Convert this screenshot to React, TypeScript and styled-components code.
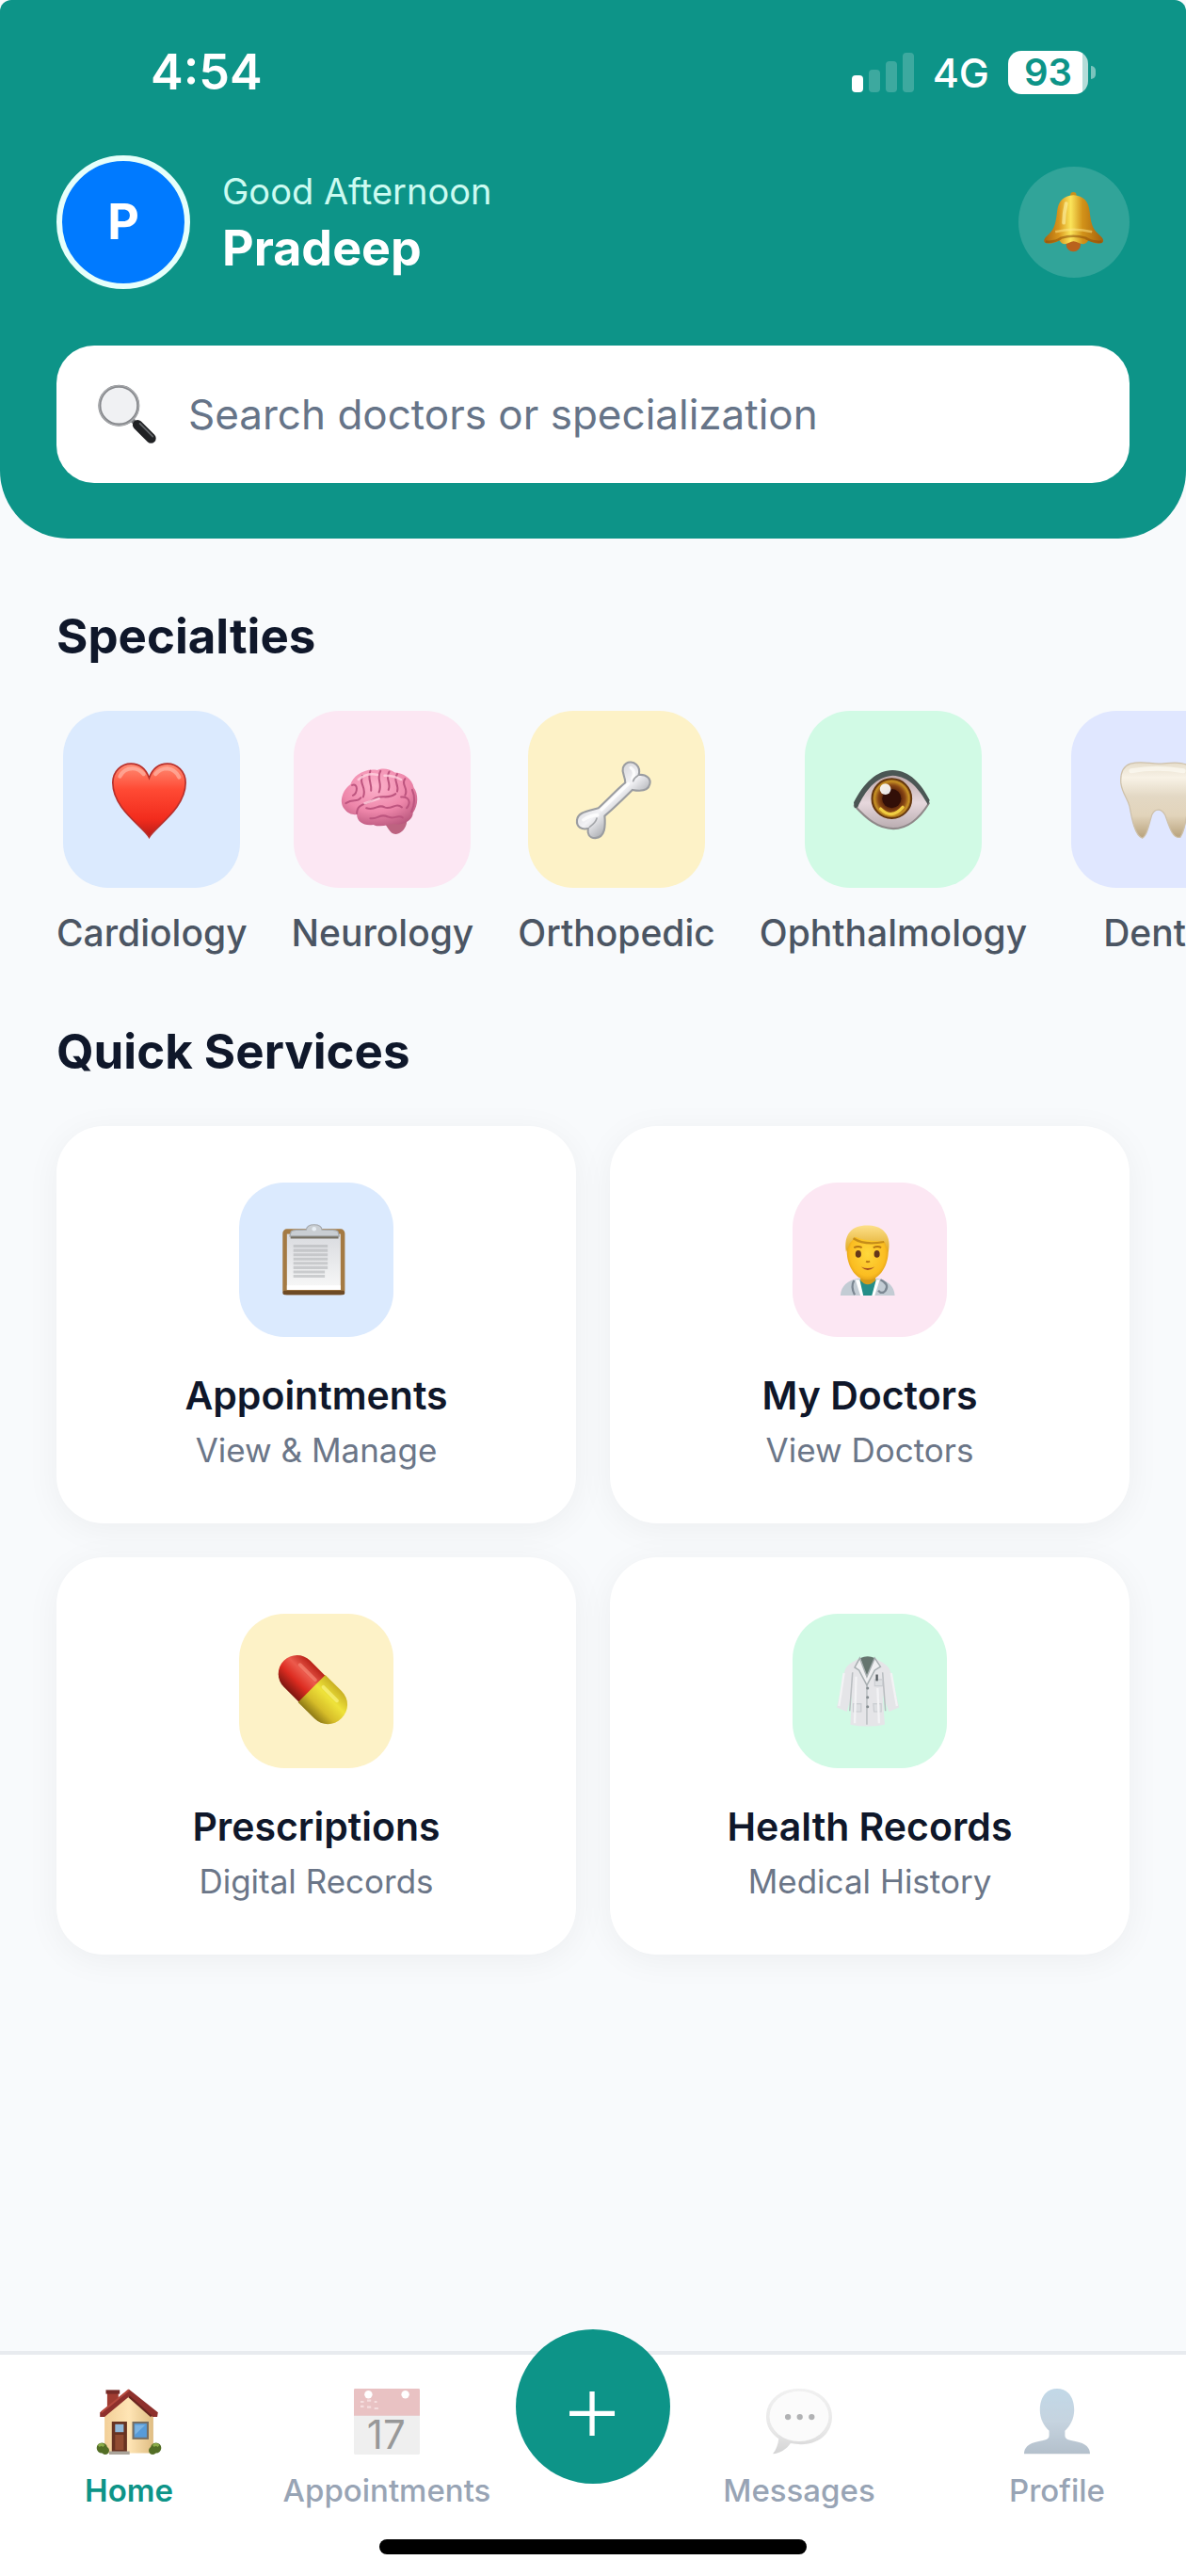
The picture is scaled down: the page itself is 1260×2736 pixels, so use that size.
import React from 'react';
import styled, { createGlobalStyle } from 'styled-components';

const teal = '#0d9488';

const GlobalStyle = createGlobalStyle`
  *, *::before, *::after { box-sizing: border-box; }
  body {
    margin: 0;
    background: #f8fafc;
    font-family: Inter, "Liberation Sans", sans-serif;
    color: #0f172a;
  }
  button, input { font-family: inherit; }
  h1, h2, h3, p, ul { margin: 0; padding: 0; }
  ul { list-style: none; }
`;

const Page = styled.div`
  min-height: 100vh;
  display: flex;
  flex-direction: column;
  overflow-x: hidden;
`;

const Header = styled.header`
  background: ${teal};
  border-radius: 12px 12px 72px 72px;
  padding: 0 60px 59px;
  color: #fff;
`;

const StatusBar = styled.div`
  height: 153px;
  padding: 0 36px 0 100px;
  display: flex;
  align-items: center;
  justify-content: space-between;
`;

const Clock = styled.time`
  font-size: 52px;
  line-height: 60px;
  font-weight: 600;
`;

const StatusIcons = styled.div`
  display: flex;
  align-items: center;
  gap: 20px;
  font-size: 43px;
  line-height: 52px;
  font-weight: 500;
`;

const Signal = styled.div`
  display: flex;
  align-items: flex-end;
  gap: 6px;
  height: 42px;
`;

const SignalBar = styled.span<{ $height: number; $on?: boolean }>`
  width: 12px;
  height: ${(p) => p.$height}px;
  border-radius: 4px;
  background: ${(p) => (p.$on ? '#fff' : 'rgba(255, 255, 255, 0.2)')};
`;

const Battery = styled.div`
  display: flex;
  align-items: center;
  gap: 3px;
`;

const BatteryBody = styled.span`
  width: 85px;
  height: 46px;
  border-radius: 14px;
  background: linear-gradient(to right, #fff 93%, #b4dcd8 93%);
  color: ${teal};
  font-size: 40px;
  line-height: 46px;
  font-weight: 600;
  text-align: center;
`;

const BatteryTip = styled.span`
  width: 5px;
  height: 14px;
  border-radius: 0 5px 5px 0;
  background: rgba(255, 255, 255, 0.45);
`;

const ProfileRow = styled.div`
  display: flex;
  align-items: center;
  padding-top: 12px;
`;

const Avatar = styled.span`
  width: 142px;
  height: 142px;
  border-radius: 50%;
  border: 6px solid #e6fffb;
  background: #007aff;
  display: flex;
  align-items: center;
  justify-content: center;
  font-size: 52px;
  line-height: 60px;
  font-weight: 700;
`;

const Greeting = styled.div`
  flex: 1;
  margin-left: 34px;
  padding-top: 4px;
`;

const GreetingText = styled.p`
  font-size: 38px;
  line-height: 52px;
  color: #ccfbf1;
`;

const UserName = styled.h1`
  font-size: 52px;
  line-height: 70px;
  font-weight: 700;
`;

const BellButton = styled.button`
  width: 118px;
  height: 118px;
  padding: 0;
  border: 0;
  border-radius: 50%;
  background: rgba(255, 255, 255, 0.15);
  display: flex;
  align-items: center;
  justify-content: center;
`;

const SearchBox = styled.label`
  margin-top: 60px;
  height: 146px;
  padding: 0 44px;
  border-radius: 40px;
  background: #fff;
  display: flex;
  align-items: center;
  gap: 34px;
`;

const SearchInput = styled.input`
  flex: 1;
  min-width: 0;
  padding: 0;
  border: 0;
  outline: 0;
  background: transparent;
  font-size: 44px;
  line-height: 60px;
  color: #0f172a;
  &::placeholder { color: #667488; opacity: 1; }
`;

const Main = styled.main`
  flex: 1;
  padding: 72px 60px 60px;
  display: flex;
  flex-direction: column;
  gap: 70px;
`;

const SectionTitle = styled.h2`
  font-size: 51px;
  line-height: 64px;
  font-weight: 700;
  margin-bottom: 47px;
`;

const SpecialtyList = styled.ul`
  display: flex;
  gap: 47px;
  margin-right: -60px;
  overflow: hidden;
`;

const SpecialtyItem = styled.li`
  flex: none;
`;

const SpecialtyButton = styled.button`
  padding: 0;
  border: 0;
  background: none;
  display: flex;
  flex-direction: column;
  align-items: center;
  gap: 24px;
  font-size: 39px;
  line-height: 48px;
  font-weight: 500;
  color: #4b5563;
`;

const IconTile = styled.span<{ $size: number; $color: string }>`
  width: ${(p) => p.$size}px;
  height: ${(p) => p.$size}px;
  border-radius: 48px;
  background: ${(p) => p.$color};
  display: flex;
  align-items: center;
  justify-content: center;
`;

const CardGrid = styled.div`
  display: grid;
  grid-template-columns: 1fr 1fr;
  gap: 36px;
`;

const Card = styled.button`
  border: 0;
  border-radius: 50px;
  background: #fff;
  box-shadow: 0 6px 36px rgba(0, 0, 0, 0.05);
  padding: 60px 24px 56px;
  display: flex;
  flex-direction: column;
  align-items: center;
  color: #0f172a;
`;

const CardTitle = styled.span`
  margin-top: 36px;
  font-size: 41px;
  line-height: 52px;
  font-weight: 600;
`;

const CardNote = styled.span`
  margin-top: 10px;
  font-size: 35px;
  line-height: 44px;
  color: #6b7688;
`;

const BottomNav = styled.nav`
  border-top: 4px solid #e8ebef;
  background: #fff;
  padding: 36px 0 23px;
`;

const TabRow = styled.div`
  display: flex;
  align-items: flex-start;
`;

const Tab = styled.a<{ $active?: boolean }>`
  flex: 1 1 0;
  min-width: 0;
  display: flex;
  flex-direction: column;
  align-items: center;
  gap: 18px;
  text-decoration: none;
  font-size: 33px;
  line-height: 40px;
  font-weight: ${(p) => (p.$active ? 600 : 500)};
  color: ${(p) => (p.$active ? teal : '#98a4b5')};
  svg { opacity: ${(p) => (p.$active ? 1 : 0.5)}; }
`;

const AddButton = styled.button`
  flex: none;
  width: 164px;
  height: 164px;
  margin: -63px 0 -101px;
  padding: 14px 0 0;
  border: 0;
  border-radius: 50%;
  background: ${teal};
  display: flex;
  align-items: center;
  justify-content: center;
`;

const HomeIndicator = styled.div`
  width: 36%;
  height: 16px;
  margin: 32px auto 0;
  border-radius: 8px;
  background: #000;
`;

type IconProps = { size: number; children: React.ReactNode };

const IconSvg = styled.svg`
  display: block;
  flex: none;
  overflow: visible;
`;

const Icon = ({ size, children }: IconProps) => (
  <IconSvg width={size} height={size} viewBox="0 0 100 100" aria-hidden="true">
    {children}
  </IconSvg>
);

const Bell = () => (
  <Icon size={64}>
    <defs>
      <linearGradient id="bellBody" x1="0" x2="1">
        <stop offset="0" stopColor="#a9650d" />
        <stop offset="0.25" stopColor="#d8951c" />
        <stop offset="0.45" stopColor="#fbe45a" />
        <stop offset="0.65" stopColor="#d29219" />
        <stop offset="1" stopColor="#a4600c" />
      </linearGradient>
    </defs>
    <circle cx="49" cy="5" r="5" fill="#c8901c" />
    <circle cx="49" cy="87" r="12" fill="#b9621c" />
    <path d="M49 5C32 6 24 15 22 32C20 50 18 60 9 69C2 75-1 79 1 83C4 87 16 86 26 80Q31 90 42 84Q49 79 57 84Q68 90 74 80C84 86 95 87 98 83C100 79 97 75 90 69C80 60 78 50 76 32C74 15 66 6 49 5Z" fill="url(#bellBody)" />
    <path d="M19 66Q49 58 80 66" stroke="#ffe98a" strokeWidth="4" opacity="0.5" fill="none" />
    <path d="M3 82Q18 84 29 76Q49 70 69 76Q81 84 96 82" stroke="#8c4c08" strokeWidth="4" opacity="0.55" fill="none" />
    <path d="M37 19Q33 35 33 51" stroke="#fff5a8" strokeWidth="6" strokeLinecap="round" opacity="0.6" fill="none" />
  </Icon>
);

const Magnifier = () => (
  <Icon size={62}>
    <path d="M59 60L69 70" stroke="#77797c" strokeWidth="8" />
    <path d="M68 68L91 91" stroke="#202124" strokeWidth="17" strokeLinecap="round" />
    <path d="M72 66L94 88" stroke="#63666a" strokeWidth="3" strokeLinecap="round" />
    <circle cx="36" cy="35" r="33" fill="#f0f1f3" stroke="#85878b" strokeWidth="5" />
    <circle cx="36" cy="35" r="34" fill="none" stroke="#a9abae" strokeWidth="2" />
  </Icon>
);

const Heart = () => (
  <Icon size={84}>
    <defs>
      <linearGradient id="heartFill" x1="0" y1="0" x2="0" y2="1">
        <stop offset="0" stopColor="#ff8d75" />
        <stop offset="0.35" stopColor="#ff4a34" />
        <stop offset="0.75" stopColor="#f22c1d" />
        <stop offset="1" stopColor="#b81c18" />
      </linearGradient>
    </defs>
    <path d="M47 98C39 84 1 62 1 29C1 14 12 5 24 5C35 5 43 12 47 23C51 12 59 5 70 5C82 5 93 14 93 29C93 62 55 84 47 98Z" fill="url(#heartFill)" stroke="#b8302b" strokeWidth="2" />
    <path d="M10 21Q15 11 26 11Q34 11 40 18M55 18Q61 11 70 11Q80 12 85 22" fill="none" stroke="#ffc0b0" strokeWidth="5" strokeLinecap="round" opacity="0.6" />
  </Icon>
);

const Brain = () => (
  <Icon size={84}>
    <defs>
      <radialGradient id="brainFill" cx="0.45" cy="0.3" r="0.75">
        <stop offset="0" stopColor="#fdb2cb" />
        <stop offset="0.6" stopColor="#ee86aa" />
        <stop offset="1" stopColor="#b9577d" />
      </radialGradient>
    </defs>
    <path d="M45 73L67 92L76 81Z" fill="#6c3449" />
    <path d="M50 76C54 70 68 66 79 71C85 78 78 93 67 94C59 94 57 84 50 76Z" fill="#bd6380" />
    <path d="M44 13C27 10 13 21 10 31C0 38-5 53 2 62C7 69 14 70 18 69C18 79 28 84 39 82C47 86 58 82 65 81C77 84 89 76 89 67C96 57 96 43 90 35C88 24 76 16 66 16C59 11 50 10 44 13Z" fill="url(#brainFill)" />
    <g fill="none" stroke="#bd557f" strokeWidth="2.4" strokeLinecap="round">
      <path d="M18 68C18 54 32 57 39 50C49 43 57 51 67 43M4 55C14 48 17 55 23 48" />
      <path d="M12 32C20 29 19 42 13 45M25 20C20 31 31 34 26 47M35 14C31 24 37 29 36 39M48 14C42 25 51 29 46 41M59 15C53 24 62 29 58 38M69 18C63 27 72 31 69 40M79 24C73 31 84 36 79 45" />
      <path d="M30 61C42 65 45 55 53 60C62 64 67 53 75 60M35 74C45 76 47 67 57 72C64 76 70 69 76 73M74 47C84 46 87 54 81 61M88 38C92 47 91 57 87 66" />
    </g>
    <path d="M20 25Q31 16 44 19M53 20Q65 20 74 25M28 55Q37 52 46 49" stroke="#ffd2e0" strokeWidth="3" fill="none" strokeLinecap="round" opacity="0.8" />
  </Icon>
);

const Bone = () => (
  <Icon size={84}>
    <defs>
      <linearGradient id="boneFill" x1="0.3" y1="0.3" x2="0.65" y2="0.7">
        <stop offset="0" stopColor="#d5d5d9" />
        <stop offset="0.5" stopColor="#f3f3f6" />
        <stop offset="1" stopColor="#adafb4" />
      </linearGradient>
    </defs>
    <path d="M59 19C54 5 67-1 75 6C80 11 79 16 78 19C88 18 94 24 92 31C90 39 80 40 70 38C60 48 43 64 35 71C36 83 36 98 23 99C15 99 13 93 14 87C6 89-1 85 0 76C1 66 14 65 27 61C38 51 54 34 61 29C61 25 60 22 59 19Z" fill="url(#boneFill)" stroke="#9b9da1" strokeWidth="2.5" />
    <path d="M31 63L65 30M68 10Q75 15 70 24M8 76Q17 70 26 70" fill="none" stroke="#fff" strokeWidth="4" strokeLinecap="round" opacity="0.8" />
    <path d="M16 85Q24 79 25 74M77 20Q72 23 71 27" fill="none" stroke="#a4a6aa" strokeWidth="2" strokeLinecap="round" />
  </Icon>
);

const Eye = () => (
  <Icon size={84}>
    <defs>
      <radialGradient id="irisFill" cx="0.5" cy="0.5" r="0.5">
        <stop offset="0.4" stopColor="#542009" />
        <stop offset="0.68" stopColor="#8a4815" />
        <stop offset="0.88" stopColor="#c99425" />
        <stop offset="1" stopColor="#6e3a10" />
      </radialGradient>
      <linearGradient id="eyeWhite" x1="0" y1="0" x2="0" y2="1">
        <stop offset="0" stopColor="#b8a2a4" />
        <stop offset="0.55" stopColor="#e6d7dc" />
        <stop offset="1" stopColor="#b9acb0" />
      </linearGradient>
    </defs>
    <path d="M1 58C13 35 27 15 49 15C72 15 85 35 95 55C82 76 68 87 50 87C30 87 16 74 1 58Z" fill="url(#eyeWhite)" stroke="#8f8889" strokeWidth="2.5" />
    <path d="M1 61L0 54C12 30 29 13 49 13C71 13 86 31 96 51L94 57C83 38 71 21 49 20C27 22 15 39 5 60Z" fill="#4b5654" />
    <circle cx="48" cy="49" r="25" fill="url(#irisFill)" stroke="#63350d" strokeWidth="2" />
    <circle cx="48" cy="49" r="12" fill="#320f08" />
    <path d="M34 62Q48 76 62 60" fill="none" stroke="#f0cd42" strokeWidth="4" strokeLinecap="round" />
    <circle cx="40" cy="37" r="7" fill="#fff" opacity="0.9" />
  </Icon>
);

const Tooth = () => (
  <Icon size={84}>
    <defs>
      <linearGradient id="toothFill" x1="0" y1="0" x2="0" y2="1">
        <stop offset="0" stopColor="#e6ddcb" />
        <stop offset="0.2" stopColor="#f8f2e6" />
        <stop offset="0.45" stopColor="#e3d8c4" />
        <stop offset="0.7" stopColor="#e2d4bb" />
        <stop offset="1" stopColor="#b7a17b" />
      </linearGradient>
    </defs>
    <path d="M13 5C27 1 37 5 48 5C60 5 72 1 84 6C96 15 97 35 88 48C84 64 84 88 76 98C66 100 62 84 57 70C52 61 44 61 40 70C36 84 34 96 28 99C19 96 15 76 12 59C9 48 3 43 1 30C0 17 4 8 13 5Z" fill="url(#toothFill)" stroke="#cec1aa" strokeWidth="1.5" />
    <path d="M14 14Q46 8 80 14" fill="none" stroke="#fffdf7" strokeWidth="6" strokeLinecap="round" opacity="0.6" />
  </Icon>
);

const Clipboard = () => (
  <Icon size={76}>
    <defs>
      <linearGradient id="paperFill" x1="0" y1="0" x2="0" y2="1">
        <stop offset="0" stopColor="#d9dbdf" />
        <stop offset="1" stopColor="#f8f8f8" />
      </linearGradient>
    </defs>
    <rect x="3" y="7" width="87" height="92" rx="6" fill="#a47a43" />
    <rect x="3" y="93" width="87" height="6" rx="3" fill="#6e4a24" />
    <rect x="9" y="14" width="75" height="78" fill="url(#paperFill)" />
    <path d="M9 86H84V92H9Z" fill="#fff" />
    <path d="M18 31H66M18 37H66M18 43H66M18 49H66M18 55H66M18 61H66M18 67H62M18 73H62" stroke="#aeb0b3" strokeWidth="4" opacity="0.55" />
    <path d="M15 10Q18 8 36 8Q37 1 47 1Q57 1 58 8Q77 8 80 10L82 17H13Z" fill="#c9ced3" stroke="#a3a7ab" strokeWidth="1.5" />
    <path d="M14 19H81" stroke="#767064" strokeWidth="3" />
    <circle cx="47" cy="7" r="3" fill="#e7eef5" />
  </Icon>
);

const Doctor = () => (
  <Icon size={76}>
    <defs>
      <radialGradient id="faceFill" cx="0.5" cy="0.5" r="0.6">
        <stop offset="0" stopColor="#ffd83c" />
        <stop offset="0.7" stopColor="#fbbd21" />
        <stop offset="1" stopColor="#d08b11" />
      </radialGradient>
      <linearGradient id="hairFill" x1="0" y1="0" x2="0" y2="1">
        <stop offset="0" stopColor="#fde08a" />
        <stop offset="1" stopColor="#dea722" />
      </linearGradient>
    </defs>
    <path d="M9 100C10 86 19 79 34 76H60C75 79 84 86 85 100Z" fill="#c3ccd4" />
    <path d="M30 78L37 100H57L64 78Z" fill="#fff" />
    <path d="M36 78L41 100H53L59 78Z" fill="#248e88" />
    <path d="M37 67V79Q47 90 58 79V67Z" fill="#d49b19" />
    <path d="M18 38C16 18 27 5 47 5C67 5 77 19 76 38C76 57 65 78 47 78C29 78 18 57 18 38Z" fill="url(#faceFill)" />
    <path d="M17 39C13 14 25 1 49 2C70 3 81 17 76 40L71 25C58 23 42 24 30 18L22 27Z" fill="url(#hairFill)" />
    <path d="M27 20Q42 30 70 25" fill="none" stroke="#c58c19" strokeWidth="3" />
    <ellipse cx="34" cy="42" rx="4" ry="5" fill="#65371a" />
    <ellipse cx="60" cy="42" rx="4" ry="5" fill="#65371a" />
    <path d="M28 33Q34 30 39 33M55 33Q61 30 66 33M45 52Q47 54 50 52" fill="none" stroke="#b67615" strokeWidth="2.5" />
    <path d="M38 60Q47 64 57 60Q47 69 38 60Z" fill="#a44c20" />
    <path d="M28 79Q23 88 29 99M65 78Q78 84 72 93Q67 99 62 93" fill="none" stroke="#7c8792" strokeWidth="3" />
  </Icon>
);

const Pill = () => (
  <Icon size={76}>
    <defs>
      <linearGradient id="pillRed" x1="0" y1="0" x2="0" y2="1">
        <stop offset="0" stopColor="#b92218" />
        <stop offset="0.35" stopColor="#ec5a4c" />
        <stop offset="0.65" stopColor="#dc2b20" />
        <stop offset="1" stopColor="#7c1610" />
      </linearGradient>
      <linearGradient id="pillYellow" x1="0" y1="0" x2="0" y2="1">
        <stop offset="0" stopColor="#c9b022" />
        <stop offset="0.35" stopColor="#efe33a" />
        <stop offset="0.7" stopColor="#d6bd29" />
        <stop offset="1" stopColor="#8e7915" />
      </linearGradient>
    </defs>
    <g transform="rotate(45 45 48)">
      <path d="M47 22H14C-1 22-12 34-12 48S-1 74 14 74H47Z" fill="url(#pillRed)" />
      <path d="M43 21H75C91 21 102 33 102 48S91 75 75 75H43Z" fill="url(#pillYellow)" />
      <path d="M8 36H38" stroke="#ff9b86" strokeWidth="5" strokeLinecap="round" opacity="0.5" />
      <path d="M53 35H80" stroke="#fff98b" strokeWidth="5" strokeLinecap="round" opacity="0.6" />
    </g>
  </Icon>
);

const Coat = () => (
  <Icon size={76}>
    <path d="M36 4C28 9 18 12 15 22L4 73L18 79L25 56L23 97Q46 102 71 97L68 56L77 79L91 73L79 23C76 12 64 9 57 4Z" fill="#e5e5e8" />
    <path d="M26 24L22 78M68 24L72 78M46 40V97" fill="none" stroke="#b9bdc0" strokeWidth="2" />
    <path d="M37 4L46 33L57 4Q47-1 37 4Z" fill="#65756f" />
    <path d="M36 4L29 17L35 21L46 42L57 21L65 16L57 4L46 30Z" fill="#efeff1" stroke="#a8afb1" strokeWidth="2" />
    <path d="M57 34H68V43H57ZM27 68H38V79H27ZM55 68H66V79H56Z" fill="#dddfe2" stroke="#c9ccd0" strokeWidth="1.5" />
    <path d="M60 27V36" stroke="#51585b" strokeWidth="3" />
    <path d="M14 25L7 71M80 25L88 71M31 30L29 95M61 46L63 95" fill="none" stroke="#f3f3f5" strokeWidth="3" />
    <circle cx="47" cy="46" r="2" fill="#858d90" />
    <circle cx="47" cy="59" r="2" fill="#858d90" />
    <circle cx="47" cy="72" r="2" fill="#858d90" />
  </Icon>
);

const House = () => (
  <Icon size={70}>
    <defs>
      <linearGradient id="wallFill" x1="0" x2="1">
        <stop offset="0" stopColor="#f2cf98" />
        <stop offset="0.5" stopColor="#ffe5b5" />
        <stop offset="1" stopColor="#dfbd83" />
      </linearGradient>
    </defs>
    <path d="M17 4H34V35H17Z" fill="#a03c31" />
    <path d="M15 2H36V8H15Z" fill="#752b27" />
    <path d="M13 37L50 7L87 38V98H13Z" fill="url(#wallFill)" />
    <path d="M50 1L94 36L93 43L86 43L50 12L13 43L6 43L6 36Z" fill="#8e302c" />
    <path d="M50 2L8 36" stroke="#b5493d" strokeWidth="3" />
    <path d="M50 12L84 42" stroke="#692620" strokeWidth="3" />
    <path d="M24 50H47V98H24Z" fill="#683322" />
    <path d="M29 54H42V66H29Z" fill="#92b9da" />
    <path d="M29 70H42V93H29Z" fill="#914c32" />
    <rect x="55" y="50" width="25" height="27" fill="#766e63" />
    <rect x="58" y="53" width="19" height="21" fill="#579bd9" />
    <path d="M59 55H75L59 70Z" fill="#7db4e3" />
    <path d="M20 95H51V100H20Z" fill="#aaa49a" />
    <g fill="#536e26">
      <circle cx="9" cy="90" r="8" />
      <circle cx="91" cy="90" r="8" />
      <circle cx="86" cy="94" r="6" />
      <circle cx="14" cy="94" r="6" />
    </g>
    <path d="M4 87Q8 83 12 87M87 87Q91 83 95 87" stroke="#8cad4a" strokeWidth="4" fill="none" />
  </Icon>
);

const CalendarText = styled.text`
  font-family: Inter, "Liberation Sans", sans-serif;
  font-size: 60px;
  font-weight: 400;
  text-anchor: middle;
`;

const Calendar = () => (
  <Icon size={70}>
    <rect x="0" y="0" width="100" height="100" rx="2" fill="#e0e0e1" />
    <path d="M0 2Q0 0 2 0H98Q100 0 100 2V41H0Z" fill="#d48689" />
    <path d="M10 20H15M20 18H26M31 20H35M10 27H15M20 28H26M31 30H37" stroke="#eebfc1" strokeWidth="3" />
    <circle cx="22" cy="9" r="6" fill="#fff" />
    <circle cx="78" cy="9" r="6" fill="#fff" />
    <CalendarText x="49" y="91" fill="#333">17</CalendarText>
  </Icon>
);

const Bubble = () => (
  <Icon size={70}>
    <defs>
      <linearGradient id="bubbleEdge" x1="0" y1="0" x2="0" y2="1">
        <stop offset="0" stopColor="#e4e4e4" />
        <stop offset="0.65" stopColor="#d2d2d2" />
        <stop offset="1" stopColor="#a9a9aa" />
      </linearGradient>
    </defs>
    <path d="M50 0C20 0 0 18 0 43C0 57 7 68 19 76C18 85 15 93 10 99C20 99 31 92 37 83C79 91 100 67 100 43C100 18 79 0 50 0Z" fill="url(#bubbleEdge)" />
    <ellipse cx="50" cy="42" rx="45" ry="38" fill="#f9f9f9" />
    <circle cx="33" cy="43" r="4.5" fill="#65686b" />
    <circle cx="51" cy="43" r="4.5" fill="#65686b" />
    <circle cx="69" cy="43" r="4.5" fill="#65686b" />
  </Icon>
);

const Person = () => (
  <Icon size={70}>
    <defs>
      <linearGradient id="personFill" x1="0" y1="0" x2="0" y2="1">
        <stop offset="0" stopColor="#86b3d1" />
        <stop offset="0.5" stopColor="#8eaac2" />
        <stop offset="1" stopColor="#6b8299" />
      </linearGradient>
    </defs>
    <path d="M50 0C34 0 24 13 24 32C24 46 30 56 38 64V71C38 77 32 78 22 80C6 83 0 90 0 99H100C100 90 94 83 78 80C68 78 62 77 62 71V64C70 56 76 46 76 32C76 13 66 0 50 0Z" fill="url(#personFill)" />
  </Icon>
);

const Plus = () => (
  <Icon size={48}>
    <path d="M48 2V100M-2 51H98" stroke="#fff" strokeWidth="11" />
  </Icon>
);

const specialties = [
  { name: 'Cardiology', color: '#dbeafe', icon: <Heart /> },
  { name: 'Neurology', color: '#fce7f3', icon: <Brain /> },
  { name: 'Orthopedic', color: '#fdf2c7', icon: <Bone /> },
  { name: 'Ophthalmology', color: '#d1fae5', icon: <Eye /> },
  { name: 'Dental', color: '#e0e7ff', icon: <Tooth /> },
];

const services = [
  { title: 'Appointments', note: 'View & Manage', color: '#dbeafe', icon: <Clipboard /> },
  { title: 'My Doctors', note: 'View Doctors', color: '#fce7f3', icon: <Doctor /> },
  { title: 'Prescriptions', note: 'Digital Records', color: '#fdf2c7', icon: <Pill /> },
  { title: 'Health Records', note: 'Medical History', color: '#d1fae5', icon: <Coat /> },
];

export default function App() {
  return (
    <Page>
      <GlobalStyle />
      <Header>
        <StatusBar>
          <Clock>4:54</Clock>
          <StatusIcons>
            <Signal>
              <SignalBar $height={18} $on />
              <SignalBar $height={24} />
              <SignalBar $height={33} />
              <SignalBar $height={42} />
            </Signal>
            <span>4G</span>
            <Battery>
              <BatteryBody>93</BatteryBody>
              <BatteryTip />
            </Battery>
          </StatusIcons>
        </StatusBar>
        <ProfileRow>
          <Avatar>P</Avatar>
          <Greeting>
            <GreetingText>Good Afternoon</GreetingText>
            <UserName>Pradeep</UserName>
          </Greeting>
          <BellButton type="button" aria-label="Notifications">
            <Bell />
          </BellButton>
        </ProfileRow>
        <SearchBox>
          <Magnifier />
          <SearchInput
            type="text"
            aria-label="Search doctors or specialization"
            placeholder="Search doctors or specialization"
          />
        </SearchBox>
      </Header>

      <Main>
        <section>
          <SectionTitle>Specialties</SectionTitle>
          <SpecialtyList>
            {specialties.map((s) => (
              <SpecialtyItem key={s.name}>
                <SpecialtyButton type="button">
                  <IconTile $size={188} $color={s.color}>{s.icon}</IconTile>
                  {s.name}
                </SpecialtyButton>
              </SpecialtyItem>
            ))}
          </SpecialtyList>
        </section>
        <section>
          <SectionTitle>Quick Services</SectionTitle>
          <CardGrid>
            {services.map((s) => (
              <Card type="button" key={s.title}>
                <IconTile $size={164} $color={s.color}>{s.icon}</IconTile>
                <CardTitle>{s.title}</CardTitle>
                <CardNote>{s.note}</CardNote>
              </Card>
            ))}
          </CardGrid>
        </section>
      </Main>

      <BottomNav>
        <TabRow>
          <Tab href="#home" $active><House />Home</Tab>
          <Tab href="#appointments"><Calendar />Appointments</Tab>
          <AddButton type="button" aria-label="Add"><Plus /></AddButton>
          <Tab href="#messages"><Bubble />Messages</Tab>
          <Tab href="#profile"><Person />Profile</Tab>
        </TabRow>
        <HomeIndicator />
      </BottomNav>
    </Page>
  );
}
